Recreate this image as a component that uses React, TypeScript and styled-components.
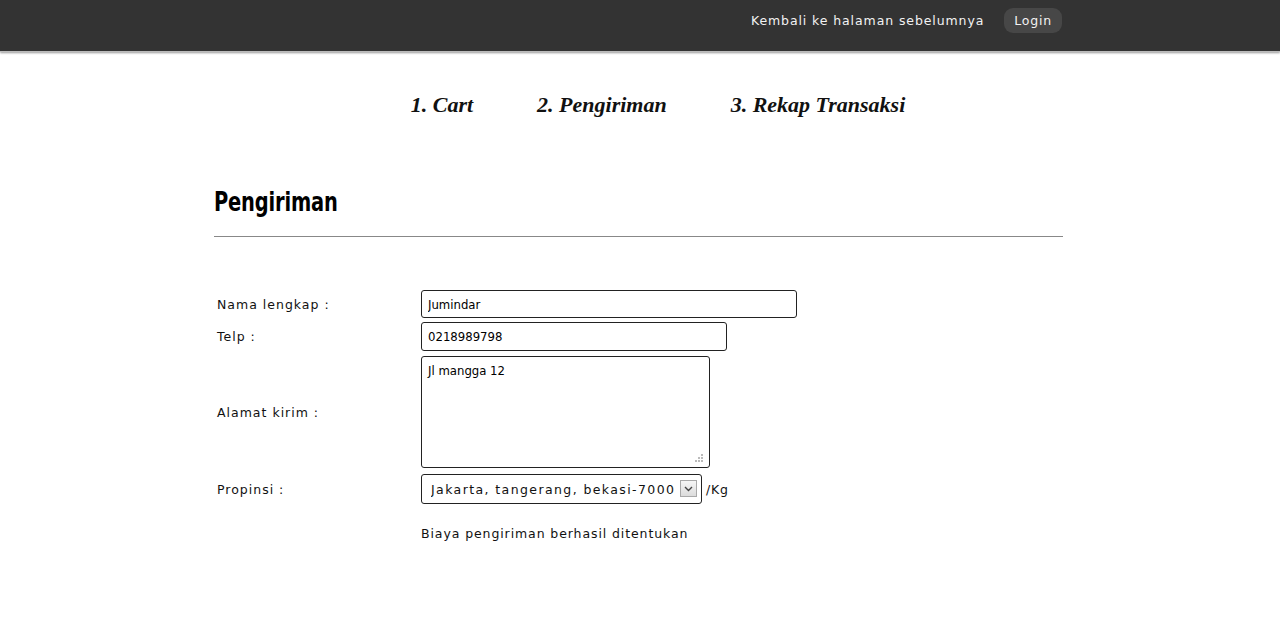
import * as React from "react";
import styled, { createGlobalStyle } from "styled-components";

const GlobalStyle = createGlobalStyle`
  html, body {
    margin: 0;
    padding: 0;
    background: #ffffff;
  }
  body {
    font-family: "DejaVu Sans", Verdana, sans-serif;
    color: #111;
  }
`;

const TopBar = styled.header`
  height: 51px;
  background: #333333;
  box-shadow: 0 1px 2px #999;
  border-bottom: 1px solid #bbb;
`;

const TopBarInner = styled.div`
  width: 852px;
  height: 100%;
  margin: 0 auto;
  display: flex;
  justify-content: flex-end;
  align-items: center;
  gap: 20px;
  padding: 0 4px 10px 0;
  box-sizing: border-box;
`;

const BackLink = styled.a`
  color: #f2f2f2;
  font-size: 12.5px;
  letter-spacing: 0.9px;
  text-decoration: none;
  cursor: pointer;
`;

const LoginButton = styled.button`
  height: 25px;
  padding: 0 10px;
  border: none;
  border-radius: 9px;
  background: #474747;
  color: #f2f2f2;
  font-family: "DejaVu Sans", Verdana, sans-serif;
  font-size: 12.5px;
  letter-spacing: 0.8px;
  cursor: pointer;
`;

const Container = styled.main`
  width: 852px;
  margin: 0 auto;
`;

const Steps = styled.nav`
  display: flex;
  justify-content: center;
  gap: 64px;
  padding: 40px 0 0 36px;
  height: 65px;
  box-sizing: border-box;
`;

const Step = styled.span`
  font-family: "Liberation Serif", "Times New Roman", serif;
  font-weight: bold;
  font-style: italic;
  font-size: 22px;
  line-height: 26px;
  color: #111;
`;

const Title = styled.h1`
  display: inline-block;
  margin: 70px 0 0;
  font-family: Impact, "DejaVu Sans Condensed", sans-serif;
  font-weight: bold;
  font-size: 27px;
  line-height: 30px;
  letter-spacing: -0.2px;
  color: #000;
  transform: scaleX(0.8);
  transform-origin: left center;
`;

const Rule = styled.hr`
  margin: 19px 3px 0 0;
  border: none;
  border-top: 1px solid #888;
  height: 0;
`;

const Form = styled.form`
  margin-top: 53px;
  display: grid;
  grid-template-columns: 204px auto;
  align-items: center;
  row-gap: 4px;
  padding-left: 3px;
`;

const Label = styled.label<{ $top?: number }>`
  font-size: 12.5px;
  letter-spacing: 1px;
  color: #111;
  margin-top: ${(p) => p.$top ?? 0}px;
`;

const Field = styled.div<{ $top?: number }>`
  display: flex;
  align-items: center;
  gap: 4px;
  margin-top: ${(p) => p.$top ?? 0}px;
`;

const TextInput = styled.input<{ $w: number; $h: number }>`
  width: ${(p) => p.$w}px;
  height: ${(p) => p.$h}px;
  box-sizing: border-box;
  border: 1px solid #222;
  border-radius: 3px;
  padding: 0 6px;
  font-family: "DejaVu Sans Condensed", Tahoma, sans-serif;
  font-size: 13px;
  color: #000;
  outline: none;
`;

const AreaWrap = styled.div`
  position: relative;
  width: 289px;
  height: 112px;
`;

const TextArea = styled.textarea`
  width: 100%;
  height: 100%;
  box-sizing: border-box;
  border: 1px solid #222;
  border-radius: 3px;
  padding: 6px 6px;
  font-family: "DejaVu Sans Condensed", Tahoma, sans-serif;
  font-size: 13px;
  color: #000;
  resize: none;
  outline: none;
  display: block;
`;

const Grip = styled.svg`
  position: absolute;
  right: 6px;
  bottom: 5px;
  pointer-events: none;
`;

const SelectWrap = styled.div`
  position: relative;
  width: 281px;
  height: 30px;
`;

const Select = styled.select`
  width: 100%;
  height: 100%;
  appearance: none;
  box-sizing: border-box;
  border: 1px solid #222;
  border-radius: 3px;
  padding: 0 0 0 9px;
  background: #fff;
  font-family: "DejaVu Sans", Verdana, sans-serif;
  font-size: 12.5px;
  letter-spacing: 1.4px;
  color: #111;
  outline: none;
`;

const Arrow = styled.span`
  position: absolute;
  top: 6px;
  right: 5px;
  width: 17px;
  height: 17px;
  box-sizing: border-box;
  border: 1px solid #a9a9a9;
  background: linear-gradient(#f6f6f6, #dcdcdc);
  display: flex;
  align-items: center;
  justify-content: center;
  pointer-events: none;
`;

const Unit = styled.span`
  font-size: 12.5px;
  letter-spacing: 0.8px;
`;

const Message = styled.p`
  margin: 22px 0 0 207px;
  font-size: 12.5px;
  letter-spacing: 0.9px;
  color: #111;
`;

export default function App() {
  return (
    <>
      <GlobalStyle />
      <TopBar>
        <TopBarInner>
          <BackLink>Kembali ke halaman sebelumnya</BackLink>
          <LoginButton>Login</LoginButton>
        </TopBarInner>
      </TopBar>
      <Container>
        <Steps>
          <Step>1. Cart</Step>
          <Step>2. Pengiriman</Step>
          <Step>3. Rekap Transaksi</Step>
        </Steps>
        <Title>Pengiriman</Title>
        <Rule />
        <Form onSubmit={(e) => e.preventDefault()}>
          <Label>Nama lengkap :</Label>
          <Field>
            <TextInput $w={376} $h={28} defaultValue="Jumindar" />
          </Field>
          <Label>Telp :</Label>
          <Field>
            <TextInput $w={306} $h={29} defaultValue="0218989798" />
          </Field>
          <Label $top={1}>Alamat kirim :</Label>
          <Field $top={1}>
            <AreaWrap>
              <TextArea defaultValue="Jl mangga 12" spellCheck={false} />
              <Grip width="10" height="10" viewBox="0 0 10 10">
                <rect x="7" y="1" width="2" height="2" fill="#bbb" />
                <rect x="4" y="4" width="2" height="2" fill="#bbb" />
                <rect x="7" y="4" width="2" height="2" fill="#bbb" />
                <rect x="1" y="7" width="2" height="2" fill="#bbb" />
                <rect x="4" y="7" width="2" height="2" fill="#bbb" />
                <rect x="7" y="7" width="2" height="2" fill="#bbb" />
              </Grip>
            </AreaWrap>
          </Field>
          <Label $top={2}>Propinsi :</Label>
          <Field $top={2}>
            <SelectWrap>
              <Select defaultValue="jkt">
                <option value="jkt">Jakarta, tangerang, bekasi-7000</option>
              </Select>
              <Arrow>
                <svg width="9" height="6" viewBox="0 0 9 6">
                  <path d="M1 1 L4.5 4.5 L8 1" stroke="#444" strokeWidth="1.4" fill="none" />
                </svg>
              </Arrow>
            </SelectWrap>
            <Unit>/Kg</Unit>
          </Field>
        </Form>
        <Message>Biaya pengiriman berhasil ditentukan</Message>
      </Container>
    </>
  );
}
